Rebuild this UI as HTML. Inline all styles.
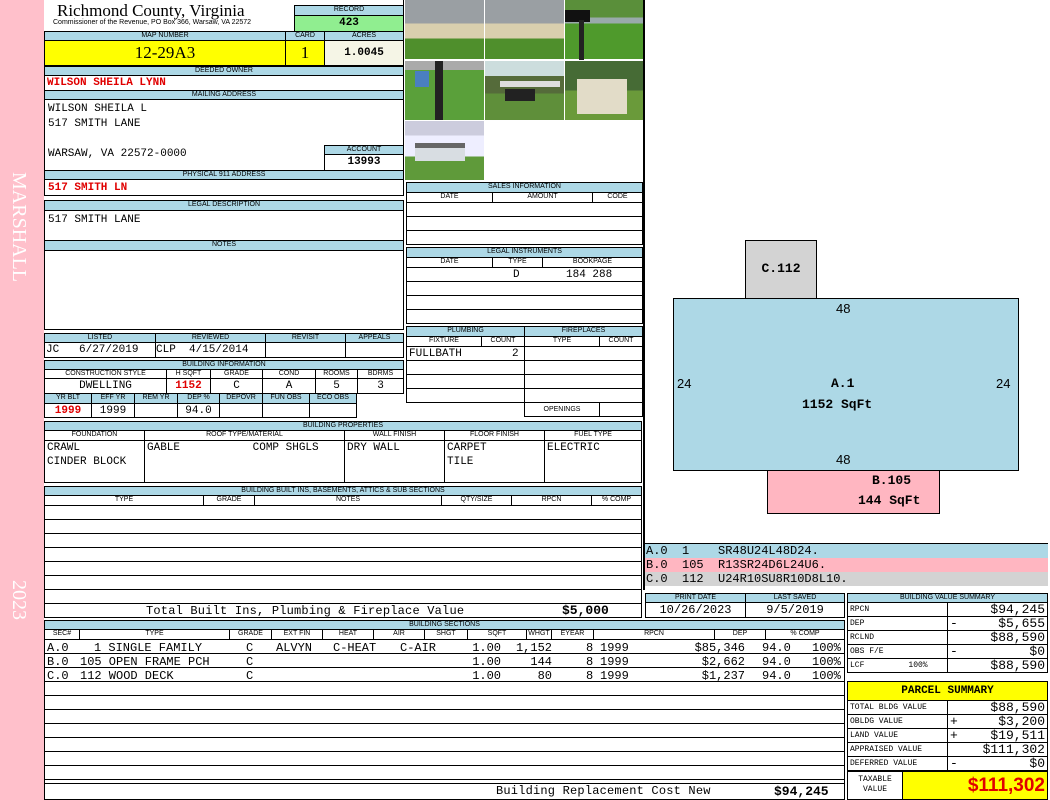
<!DOCTYPE html>
<html><head><meta charset="utf-8"><style>
*{margin:0;padding:0;box-sizing:border-box}
body{width:1050px;height:800px;position:relative;background:#fff;overflow:hidden;font-family:"Liberation Sans",sans-serif}
.c{position:absolute;border:1px solid #000;overflow:hidden;white-space:nowrap}
.a{position:absolute;white-space:nowrap}
.h{position:absolute;background:#add8e6;border:1px solid #000;font-size:7px;line-height:8px;text-align:center;overflow:hidden;white-space:nowrap}
.k{position:absolute;border:1px solid #000;font-size:7px;line-height:8px;text-align:center;background:#fff;white-space:nowrap;overflow:hidden}
.m{font-family:"Liberation Mono",monospace;font-size:11px}
.r{color:#e00000;font-weight:bold}
.rows{background:repeating-linear-gradient(#fff 0 13px,#000 13px 14px)}
.ph{position:absolute;width:79px;height:59px;background:linear-gradient(#9a9fa3 0 40%,#d9cfae 40% 65%,#4f8f2c 65%)}
.sr{position:absolute;font-family:"Liberation Mono",monospace;font-size:12px;line-height:14px;white-space:nowrap}
.sr span{position:absolute;top:0}
</style></head><body>
<div class="a" style="left:0;top:0;width:44px;height:800px;background:#ffc0cb"></div>
<div class="a" style="left:7px;top:172px;color:#fff;font-family:'Liberation Serif',serif;font-size:20px;writing-mode:vertical-rl">MARSHALL</div>
<div class="a" style="left:7px;top:580px;color:#fff;font-family:'Liberation Serif',serif;font-size:20px;writing-mode:vertical-rl">2023</div>

<div class="a" style="left:57px;top:1px;font-family:'Liberation Serif',serif;font-size:17px">Richmond County, Virginia</div>
<div class="a" style="left:53px;top:19px;font-size:7px">Commissioner of the Revenue, PO Box 366, Warsaw, VA 22572</div>
<div class="h" style="left:294px;top:5px;width:110px;height:11px">RECORD</div>
<div class="c m" style="left:294px;top:15px;width:110px;height:17px;background:#90ee90;text-align:center;font-weight:bold;line-height:15px">423</div>
<div class="h" style="left:44px;top:31px;width:242px;height:10px">MAP NUMBER</div>
<div class="h" style="left:285px;top:31px;width:40px;height:10px">CARD</div>
<div class="h" style="left:324px;top:31px;width:80px;height:10px">ACRES</div>
<div class="c" style="left:44px;top:40px;width:242px;height:26px;background:#ff0;text-align:center;font-family:'Liberation Serif',serif;font-size:17px;line-height:24px">12-29A3</div>
<div class="c" style="left:285px;top:40px;width:40px;height:26px;background:#ff0;text-align:center;font-family:'Liberation Serif',serif;font-size:17px;line-height:24px">1</div>
<div class="c m" style="left:324px;top:40px;width:80px;height:26px;background:#f5f5e6;text-align:center;font-weight:bold;line-height:24px">1.0045</div>
<div class="h" style="left:44px;top:66px;width:360px;height:10px">DEEDED OWNER</div>
<div class="c m r" style="left:44px;top:75px;width:360px;height:16px;padding-left:2px;line-height:15px">WILSON SHEILA LYNN</div>
<div class="h" style="left:44px;top:90px;width:360px;height:10px">MAILING ADDRESS</div>
<div class="c m" style="left:44px;top:99px;width:360px;height:72px;padding:2px 3px;line-height:15px;white-space:pre">WILSON SHEILA L
517 SMITH LANE

WARSAW, VA 22572-0000</div>
<div class="h" style="left:324px;top:145px;width:80px;height:10px">ACCOUNT</div>
<div class="c m" style="left:324px;top:154px;width:80px;height:17px;text-align:center;font-weight:bold;line-height:15px">13993</div>
<div class="h" style="left:44px;top:170px;width:360px;height:10px">PHYSICAL 911 ADDRESS</div>
<div class="c m r" style="left:44px;top:179px;width:360px;height:17px;padding-left:3px;line-height:16px">517 SMITH LN</div>
<div class="h" style="left:44px;top:200px;width:360px;height:11px">LEGAL DESCRIPTION</div>
<div class="c m" style="left:44px;top:210px;width:360px;height:31px;padding:2px 3px;line-height:14px">517 SMITH LANE</div>
<div class="h" style="left:44px;top:240px;width:360px;height:11px">NOTES</div>
<div class="c" style="left:44px;top:250px;width:360px;height:80px"></div>

<div class="h" style="left:44px;top:333px;width:112px;height:10px">LISTED</div>
<div class="h" style="left:155px;top:333px;width:111px;height:10px">REVIEWED</div>
<div class="h" style="left:265px;top:333px;width:81px;height:10px">REVISIT</div>
<div class="h" style="left:345px;top:333px;width:59px;height:10px">APPEALS</div>
<div class="c m" style="left:44px;top:342px;width:112px;height:16px;padding-left:1px;line-height:14px;white-space:pre">JC   6/27/2019</div>
<div class="c m" style="left:155px;top:342px;width:111px;height:16px;line-height:14px;white-space:pre">CLP  4/15/2014</div>
<div class="c" style="left:265px;top:342px;width:81px;height:16px"></div>
<div class="c" style="left:345px;top:342px;width:59px;height:16px"></div>

<div class="h" style="left:44px;top:360px;width:360px;height:10px">BUILDING INFORMATION</div>
<div class="k" style="left:44px;top:369px;width:123px;height:10px">CONSTRUCTION STYLE</div>
<div class="k" style="left:166px;top:369px;width:45px;height:10px">H SQFT</div>
<div class="k" style="left:210px;top:369px;width:53px;height:10px">GRADE</div>
<div class="k" style="left:262px;top:369px;width:54px;height:10px">COND</div>
<div class="k" style="left:315px;top:369px;width:43px;height:10px">ROOMS</div>
<div class="k" style="left:357px;top:369px;width:47px;height:10px">BDRMS</div>
<div class="c m" style="left:44px;top:378px;width:123px;height:16px;text-align:center;line-height:15px">DWELLING</div>
<div class="c m r" style="left:166px;top:378px;width:45px;height:16px;text-align:center;line-height:15px">1152</div>
<div class="c m" style="left:210px;top:378px;width:53px;height:16px;text-align:center;line-height:15px">C</div>
<div class="c m" style="left:262px;top:378px;width:54px;height:16px;text-align:center;line-height:15px">A</div>
<div class="c m" style="left:315px;top:378px;width:43px;height:16px;text-align:center;line-height:15px">5</div>
<div class="c m" style="left:357px;top:378px;width:47px;height:16px;text-align:center;line-height:15px">3</div>
<div class="h" style="left:44px;top:393px;width:48px;height:11px">YR BLT</div>
<div class="h" style="left:91px;top:393px;width:44px;height:11px">EFF YR</div>
<div class="h" style="left:134px;top:393px;width:44px;height:11px">REM YR</div>
<div class="h" style="left:177px;top:393px;width:43px;height:11px">DEP %</div>
<div class="h" style="left:219px;top:393px;width:44px;height:11px">DEPOVR</div>
<div class="h" style="left:262px;top:393px;width:48px;height:11px">FUN OBS</div>
<div class="h" style="left:309px;top:393px;width:48px;height:11px">ECO OBS</div>
<div class="c m r" style="left:44px;top:403px;width:48px;height:15px;text-align:center;line-height:14px">1999</div>
<div class="c m" style="left:91px;top:403px;width:44px;height:15px;text-align:center;line-height:14px">1999</div>
<div class="c" style="left:134px;top:403px;width:44px;height:15px"></div>
<div class="c m" style="left:177px;top:403px;width:43px;height:15px;text-align:center;line-height:14px">94.0</div>
<div class="c" style="left:219px;top:403px;width:44px;height:15px"></div>
<div class="c" style="left:262px;top:403px;width:48px;height:15px"></div>
<div class="c" style="left:309px;top:403px;width:48px;height:15px"></div>

<!-- photos -->
<div class="ph" style="left:405px;top:0"></div>
<div class="ph" style="left:485px;top:0"></div>
<div class="ph" style="left:565px;top:0;background:linear-gradient(#5a8f3a 0 30%,#9aa 30% 40%,#4f9a2c 40%)"><div class="a" style="left:0;top:10px;width:25px;height:12px;background:#111"></div><div class="a" style="left:14px;top:20px;width:5px;height:40px;background:#222"></div></div>
<div class="ph" style="left:405px;top:61px;background:linear-gradient(#aaa 0 15%,#5aa03a 15%)"><div class="a" style="left:30px;top:0;width:8px;height:59px;background:#222"></div><div class="a" style="left:10px;top:10px;width:14px;height:16px;background:#4a7fc0"></div></div>
<div class="ph" style="left:485px;top:61px;background:linear-gradient(#cdd 0 25%,#556b3a 25% 55%,#5f8f3a 55%)"><div class="a" style="left:20px;top:28px;width:30px;height:12px;background:#222"></div><div class="a" style="left:15px;top:20px;width:60px;height:6px;background:#ddd"></div></div>
<div class="ph" style="left:565px;top:61px;background:linear-gradient(#466b35 0 50%,#6a9a3a 50%)"><div class="a" style="left:12px;top:18px;width:50px;height:35px;background:#e2dcc8"></div></div>
<div class="ph" style="left:405px;top:121px;height:59px;background:linear-gradient(#ccd 0 25%,#eef 25% 60%,#5f9a3a 60%)"><div class="a" style="left:10px;top:22px;width:50px;height:18px;background:#d8dde2;border-top:5px solid #666"></div></div>
<div class="a" style="left:643px;top:0;width:2px;height:590px;background:#000"></div>
<div class="a" style="left:403px;top:0;width:1px;height:180px;background:#000"></div>

<!-- sales -->
<div class="h" style="left:406px;top:182px;width:237px;height:11px">SALES INFORMATION</div>
<div class="k" style="left:406px;top:192px;width:87px;height:11px">DATE</div>
<div class="k" style="left:492px;top:192px;width:101px;height:11px">AMOUNT</div>
<div class="k" style="left:592px;top:192px;width:51px;height:11px">CODE</div>
<div class="c rows" style="left:406px;top:202px;width:237px;height:43px"></div>
<div class="h" style="left:406px;top:247px;width:237px;height:11px">LEGAL INSTRUMENTS</div>
<div class="k" style="left:406px;top:257px;width:87px;height:11px">DATE</div>
<div class="k" style="left:492px;top:257px;width:51px;height:11px">TYPE</div>
<div class="k" style="left:542px;top:257px;width:101px;height:11px">BOOKPAGE</div>
<div class="c rows" style="left:406px;top:267px;width:237px;height:57px"></div>
<div class="a m" style="left:513px;top:269px">D</div>
<div class="a m" style="left:566px;top:269px">184 288</div>
<div class="h" style="left:406px;top:326px;width:119px;height:11px">PLUMBING</div>
<div class="h" style="left:524px;top:326px;width:119px;height:11px">FIREPLACES</div>
<div class="k" style="left:406px;top:336px;width:76px;height:11px">FIXTURE</div>
<div class="k" style="left:481px;top:336px;width:44px;height:11px">COUNT</div>
<div class="k" style="left:524px;top:336px;width:76px;height:11px">TYPE</div>
<div class="k" style="left:599px;top:336px;width:44px;height:11px">COUNT</div>
<div class="c rows" style="left:406px;top:346px;width:119px;height:57px"></div>
<div class="c rows" style="left:524px;top:346px;width:119px;height:57px"></div>
<div class="a m" style="left:409px;top:348px">FULLBATH</div>
<div class="a m" style="left:512px;top:348px">2</div>
<div class="k" style="left:524px;top:402px;width:76px;height:15px;line-height:13px">OPENINGS</div>
<div class="k" style="left:599px;top:402px;width:44px;height:15px"></div>

<!-- building properties -->
<div class="h" style="left:44px;top:421px;width:598px;height:10px">BUILDING PROPERTIES</div>
<div class="k" style="left:44px;top:430px;width:101px;height:11px">FOUNDATION</div>
<div class="k" style="left:144px;top:430px;width:201px;height:11px">ROOF TYPE/MATERIAL</div>
<div class="k" style="left:344px;top:430px;width:101px;height:11px">WALL FINISH</div>
<div class="k" style="left:444px;top:430px;width:101px;height:11px">FLOOR FINISH</div>
<div class="k" style="left:544px;top:430px;width:98px;height:11px">FUEL TYPE</div>
<div class="c m" style="left:44px;top:440px;width:101px;height:43px;padding-left:2px;line-height:14px">CRAWL<br>CINDER BLOCK</div>
<div class="c m" style="left:144px;top:440px;width:201px;height:43px;padding-left:2px;line-height:14px;white-space:pre">GABLE           COMP SHGLS</div>
<div class="c m" style="left:344px;top:440px;width:101px;height:43px;padding-left:2px;line-height:14px">DRY WALL</div>
<div class="c m" style="left:444px;top:440px;width:101px;height:43px;padding-left:2px;line-height:14px">CARPET<br>TILE</div>
<div class="c m" style="left:544px;top:440px;width:98px;height:43px;padding-left:2px;line-height:14px">ELECTRIC</div>

<!-- built ins -->
<div class="h" style="left:44px;top:486px;width:598px;height:10px">BUILDING BUILT INS, BASEMENTS, ATTICS &amp; SUB SECTIONS</div>
<div class="k" style="left:44px;top:495px;width:160px;height:11px">TYPE</div>
<div class="k" style="left:203px;top:495px;width:52px;height:11px">GRADE</div>
<div class="k" style="left:254px;top:495px;width:188px;height:11px">NOTES</div>
<div class="k" style="left:441px;top:495px;width:71px;height:11px">QTY/SIZE</div>
<div class="k" style="left:511px;top:495px;width:81px;height:11px">RPCN</div>
<div class="k" style="left:591px;top:495px;width:51px;height:11px">% COMP</div>
<div class="c rows" style="left:44px;top:505px;width:598px;height:99px"></div>
<div class="c" style="left:44px;top:603px;width:598px;height:15px;font-family:'Liberation Mono',monospace;font-size:12px;line-height:14px"><span class="a" style="left:101px;letter-spacing:0.2px">Total Built Ins, Plumbing &amp; Fireplace Value</span><span class="a" style="left:517px;font-weight:bold;font-size:13px">$5,000</span></div>

<!-- building sections -->
<div class="h" style="left:44px;top:620px;width:801px;height:10px">BUILDING SECTIONS</div>
<div class="k" style="left:44px;top:629px;width:36px;height:11px">SEC#</div>
<div class="k" style="left:79px;top:629px;width:151px;height:11px">TYPE</div>
<div class="k" style="left:229px;top:629px;width:43px;height:11px">GRADE</div>
<div class="k" style="left:271px;top:629px;width:52px;height:11px">EXT FIN</div>
<div class="k" style="left:322px;top:629px;width:52px;height:11px">HEAT</div>
<div class="k" style="left:373px;top:629px;width:52px;height:11px">AIR</div>
<div class="k" style="left:424px;top:629px;width:44px;height:11px">SHGT</div>
<div class="k" style="left:467px;top:629px;width:60px;height:11px">SQFT</div>
<div class="k" style="left:526px;top:629px;width:26px;height:11px">WHGT</div>
<div class="k" style="left:551px;top:629px;width:43px;height:11px">EYEAR</div>
<div class="k" style="left:593px;top:629px;width:122px;height:11px">RPCN</div>
<div class="k" style="left:714px;top:629px;width:52px;height:11px">DEP</div>
<div class="k" style="left:765px;top:629px;width:80px;height:11px">% COMP</div>
<div class="c rows" style="left:44px;top:639px;width:801px;height:145px"></div>
<div class="sr" style="left:0;top:641px;width:850px;height:14px">
<span style="left:47px">A.0</span><span style="left:94px">1 SINGLE FAMILY</span><span style="left:246px">C</span><span style="left:276px">ALVYN</span><span style="left:333px">C-HEAT</span><span style="left:400px">C-AIR</span><span style="right:349px">1.00</span><span style="right:298px">1,152</span><span style="left:586px">8</span><span style="left:600px">1999</span><span style="right:105px">$85,346</span><span style="left:762px">94.0</span><span style="left:812px">100%</span></div>
<div class="sr" style="left:0;top:655px;width:850px;height:14px">
<span style="left:47px">B.0</span><span style="left:80px">105 OPEN FRAME PCH</span><span style="left:246px">C</span><span style="right:349px">1.00</span><span style="right:298px">144</span><span style="left:586px">8</span><span style="left:600px">1999</span><span style="right:105px">$2,662</span><span style="left:762px">94.0</span><span style="left:812px">100%</span></div>
<div class="sr" style="left:0;top:669px;width:850px;height:14px">
<span style="left:47px">C.0</span><span style="left:80px">112 WOOD DECK</span><span style="left:246px">C</span><span style="right:349px">1.00</span><span style="right:298px">80</span><span style="left:586px">8</span><span style="left:600px">1999</span><span style="right:105px">$1,237</span><span style="left:762px">94.0</span><span style="left:812px">100%</span></div>
<div class="c" style="left:44px;top:783px;width:801px;height:17px;font-family:'Liberation Mono',monospace;font-size:12px;line-height:15px"><span class="a" style="left:451px;letter-spacing:0.2px">Building Replacement Cost New</span><span class="a" style="left:729px;font-weight:bold;font-size:13px">$94,245</span></div>

<!-- sketch -->
<div class="c" style="left:745px;top:240px;width:72px;height:59px;background:#d3d3d3;font:bold 13px 'Liberation Mono',monospace;text-align:center;line-height:56px">C.112</div>
<div class="c" style="left:673px;top:298px;width:346px;height:173px;background:#add8e6;font:bold 13px 'Liberation Mono',monospace">
<span class="a" style="left:162px;top:2px;font-weight:normal;font-family:'Liberation Sans'">48</span>
<span class="a" style="left:162px;top:153px;font-weight:normal;font-family:'Liberation Sans'">48</span>
<span class="a" style="left:3px;top:77px;font-weight:normal;font-family:'Liberation Sans'">24</span>
<span class="a" style="left:322px;top:77px;font-weight:normal;font-family:'Liberation Sans'">24</span>
<span class="a" style="left:157px;top:77px">A.1</span>
<span class="a" style="left:128px;top:98px">1152 SqFt</span></div>
<div class="c" style="left:767px;top:470px;width:173px;height:44px;background:#ffb6c1;font:bold 13px 'Liberation Mono',monospace">
<span class="a" style="left:104px;top:2px">B.105</span><span class="a" style="left:90px;top:22px">144 SqFt</span></div>
<div class="a" style="left:645px;top:543px;width:403px;height:1px;background:#000"></div>
<div class="a m" style="left:645px;top:544px;width:403px;height:14px;background:#add8e6;padding-left:1px;line-height:14px;white-space:pre;font-size:12px">A.0  1    SR48U24L48D24.</div>
<div class="a m" style="left:645px;top:558px;width:403px;height:14px;background:#ffb6c1;padding-left:1px;line-height:14px;white-space:pre;font-size:12px">B.0  105  R13SR24D6L24U6.</div>
<div class="a m" style="left:645px;top:572px;width:403px;height:14px;background:#d3d3d3;padding-left:1px;line-height:14px;white-space:pre;font-size:12px">C.0  112  U24R10SU8R10D8L10.</div>

<!-- print date -->
<div class="h" style="left:645px;top:593px;width:101px;height:10px">PRINT DATE</div>
<div class="h" style="left:745px;top:593px;width:100px;height:10px">LAST SAVED</div>
<div class="c m" style="left:645px;top:602px;width:101px;height:16px;text-align:center;line-height:14px;font-size:12px">10/26/2023</div>
<div class="c m" style="left:745px;top:602px;width:100px;height:16px;text-align:center;line-height:14px;font-size:12px">9/5/2019</div>

<!-- value summary -->
<div class="h" style="left:847px;top:593px;width:201px;height:10px">BUILDING VALUE SUMMARY</div>
<div class="c" style="left:847px;top:602px;width:101px;height:71px;font:8px 'Liberation Mono',monospace;line-height:14px;padding-left:2px;background:repeating-linear-gradient(#fff 0 13px,#000 13px 14px)">RPCN<br>DEP<br>RCLND<br>OBS F/E<br>LCF<span style="margin-left:44px">100%</span></div>
<div class="c m" style="left:947px;top:602px;width:101px;height:71px;line-height:14px;text-align:right;padding-right:2px;font-size:13px;background:repeating-linear-gradient(#fff 0 13px,#000 13px 14px)">$94,245<br><span style="float:left;padding-left:2px">-</span>$5,655<br>$88,590<br><span style="float:left;padding-left:2px">-</span>$0<br>$88,590</div>

<div class="c" style="left:847px;top:681px;width:201px;height:20px;background:#ff0;font:bold 11px 'Liberation Mono',monospace;text-align:center;line-height:18px">PARCEL SUMMARY</div>
<div class="c" style="left:847px;top:700px;width:101px;height:72px;font:8px 'Liberation Mono',monospace;line-height:14px;padding-left:2px;background:repeating-linear-gradient(#fff 0 13px,#000 13px 14px)">TOTAL BLDG VALUE<br>OBLDG VALUE<br>LAND VALUE<br>APPRAISED VALUE<br>DEFERRED VALUE</div>
<div class="c m" style="left:947px;top:700px;width:101px;height:72px;line-height:14px;text-align:right;padding-right:2px;font-size:13px;background:repeating-linear-gradient(#fff 0 13px,#000 13px 14px)">$88,590<br><span style="float:left;padding-left:2px">+</span>$3,200<br><span style="float:left;padding-left:2px">+</span>$19,511<br>$111,302<br><span style="float:left;padding-left:2px">-</span>$0</div>
<div class="c" style="left:847px;top:771px;width:56px;height:29px;font:8px 'Liberation Mono',monospace;line-height:10px;text-align:center;padding-top:3px">TAXABLE<br>VALUE</div>
<div class="c" style="left:902px;top:771px;width:146px;height:29px;background:#ff0;color:#e00000;font:bold 19px 'Liberation Sans',sans-serif;text-align:right;padding-right:2px;line-height:27px">$111,302</div>
</body></html>
